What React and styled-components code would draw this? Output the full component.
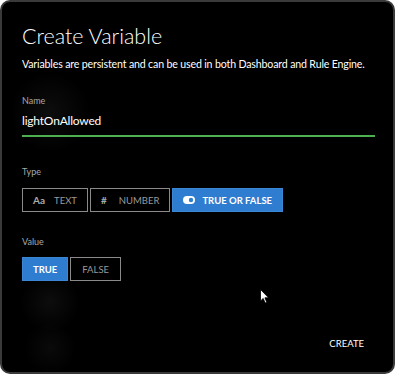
import React, { useState } from 'react'
import styled, { createGlobalStyle } from 'styled-components'

const GlobalStyle = createGlobalStyle`
  html, body {
    margin: 0;
    padding: 0;
    background: #ffffff;
  }
  body {
    font-family: Lato, 'Noto Sans', sans-serif;
  }
`

const Dialog = styled.div`
  position: relative;
  box-sizing: border-box;
  width: 395px;
  height: 374px;
  border: 2px solid #3a3a3a;
  border-radius: 10px;
  background-color: #000;
  background-image: radial-gradient(circle at 48px 110px, rgba(255, 255, 255, 0.05), transparent 40px),
    radial-gradient(circle at 48px 300px, rgba(255, 255, 255, 0.05), transparent 30px),
    radial-gradient(circle at 48px 346px, rgba(255, 255, 255, 0.04), transparent 26px);
  color: #fff;
  padding: 19px 18px 0 20px;
  display: flex;
  flex-direction: column;
  overflow: hidden;
`

const Title = styled.h1`
  margin: 0;
  font-size: 21.5px;
  font-weight: 300;
  line-height: 30px;
`

const Subtitle = styled.p`
  margin: 5px 0 0;
  font-size: 10.6px;
  line-height: 16px;
  letter-spacing: -0.15px;
  white-space: nowrap;
`

const Label = styled.div`
  margin-top: ${props => props.top}px;
  font-size: 9px;
  line-height: 12px;
  color: #a8a8a8;
`

const NameInput = styled.input`
  box-sizing: border-box;
  width: 100%;
  margin-top: 5px;
  padding: 0 0 5px;
  border: none;
  border-bottom: 2px solid #4caf50;
  background: transparent;
  color: #fff;
  font-family: inherit;
  font-size: 12px;
  line-height: 18px;
  letter-spacing: -0.2px;
  outline: none;
`

const ButtonRow = styled.div`
  display: flex;
  gap: 2px;
  margin-top: ${props => props.top}px;
`

const Choice = styled.button`
  display: flex;
  align-items: center;
  gap: ${props => props.iconGap || 0}px;
  box-sizing: border-box;
  height: 24px;
  padding: 0 ${props => props.pad || 10}px;
  border: 1px solid ${props => (props.active ? '#3b87d4' : '#8a8a8a')};
  background: ${props => (props.active ? '#2f7dd0' : '#000')};
  color: ${props => (props.active ? '#fff' : '#9a9a9a')};
  font-family: inherit;
  font-size: 9.5px;
  font-weight: ${props => (props.active ? 700 : 400)};
  cursor: pointer;
`

const IconText = styled.span`
  font-size: 10px;
  font-weight: 700;
  color: #aaa;
`

const Footer = styled.div`
  margin-top: auto;
  display: flex;
  justify-content: flex-end;
  padding: 0 11px 23px 0;
`

const CreateButton = styled.button`
  border: none;
  background: none;
  color: #fff;
  font-family: inherit;
  font-size: 9.5px;
  padding: 0;
  cursor: pointer;
`

const Pointer = styled.svg`
  position: absolute;
  left: 258px;
  top: 287px;
`

const ToggleIcon = () => (
  <svg width='12' height='8' viewBox='0 0 12 8'>
    <rect x='0' y='0' width='12' height='8' rx='4' fill='#fff' />
    <circle cx='8' cy='4' r='2.2' fill='#2f7dd0' />
  </svg>
)

export default function App() {
  const [name, setName] = useState('lightOnAllowed')
  const [type, setType] = useState('bool')
  const [value, setValue] = useState(true)

  return (
    <>
      <GlobalStyle />
      <Dialog>
        <Title>Create Variable</Title>
        <Subtitle>Variables are persistent and can be used in both Dashboard and Rule Engine.</Subtitle>

        <Label top={23}>Name</Label>
        <NameInput value={name} onChange={e => setName(e.target.value)} />

        <Label top={29}>Type</Label>
        <ButtonRow top={10}>
          <Choice active={type === 'text'} iconGap={9} pad={10} onClick={() => setType('text')}>
            <IconText>Aa</IconText>TEXT
          </Choice>
          <Choice active={type === 'number'} iconGap={12} pad={10} onClick={() => setType('number')}>
            <IconText>#</IconText>NUMBER
          </Choice>
          <Choice active={type === 'bool'} iconGap={7} pad={10} onClick={() => setType('bool')}>
            <ToggleIcon />TRUE OR FALSE
          </Choice>
        </ButtonRow>

        <Label top={24}>Value</Label>
        <ButtonRow top={9}>
          <Choice active={value} pad={10} onClick={() => setValue(true)}>TRUE</Choice>
          <Choice active={!value} pad={11} onClick={() => setValue(false)}>FALSE</Choice>
        </ButtonRow>

        <Footer>
          <CreateButton>CREATE</CreateButton>
        </Footer>

        <Pointer width='10' height='15' viewBox='0 0 10 15'>
          <path d='M0.5 0.5 L0.5 12 L3.2 9.4 L5.2 14 L6.8 13.3 L4.9 8.8 L8.6 8.8 Z' fill='#fff' stroke='#000' strokeWidth='0.8' />
        </Pointer>
      </Dialog>
    </>
  )
}
